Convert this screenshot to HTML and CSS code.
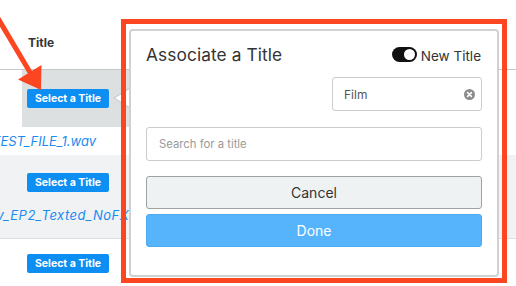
FILE: index.html
```html
<!DOCTYPE html>
<html>
<head>
<meta charset="utf-8">
<link rel="stylesheet" href="styles.css">
</head>
<body>
<div class="table">
  <div class="thead"><span class="th">Title</span></div>
  <div class="row row1">
    <div class="cell-active"><button class="sel">Select a Title</button></div>
    <div class="fname"><span class="clip">TEST_FILE_1.wav</span></div>
  </div>
  <div class="row row2">
    <div class="btncell"><button class="sel">Select a Title</button></div>
    <div class="fname"><span class="clip2">Show_v_EP2_Texted_NoFX.wav</span></div>
  </div>
  <div class="row row3">
    <div class="btncell"><button class="sel">Select a Title</button></div>
  </div>
</div>

<svg class="pop-arrow" width="20" height="24" viewBox="0 0 20 24">
  <polygon points="1,11 17,1 17,21" fill="#ffffff" stroke="#c9cbcc" stroke-width="1.2"/>
</svg>

<div class="popover">
  <div class="pop-head">
    <h3 class="pop-title">Associate a Title</h3>
    <label class="newtitle"><span class="toggle"><span class="knob"></span></span><span>New Title</span></label>
  </div>
  <div class="film-wrap">
    <div class="film">
      <span>Film</span>
      <svg class="clear" width="11" height="11" viewBox="0 0 11 11">
        <circle cx="5.5" cy="5.5" r="5.5" fill="#8c8c8c"/>
        <path d="M3.6 3.6 L7.4 7.4 M7.4 3.6 L3.6 7.4" stroke="#fff" stroke-width="1.5" stroke-linecap="round"/>
      </svg>
    </div>
  </div>
  <div class="search">Search for a title</div>
  <button class="cancel">Cancel</button>
  <button class="done">Done</button>
</div>

<div class="redbox"></div>
<svg class="redarrow" width="50" height="95" viewBox="0 0 50 95">
  <line x1="-4" y1="15" x2="31" y2="74" stroke="#fc4521" stroke-width="5"/>
  <polygon points="41,90 18,79.5 41.5,65" fill="#fc4521"/>
</svg>
</body>
</html>
```

FILE: styles.css
```css
* { box-sizing: border-box; }
html, body {
  margin: 0;
  padding: 0;
  width: 516px;
  height: 286px;
  overflow: hidden;
  background: #ffffff;
  font-family: "Inter", "Lato", sans-serif;
  position: relative;
}
.table { width: 516px; }
.thead {
  height: 70px;
  border-bottom: 1px solid #c5c7c8;
  padding: 35px 0 0 28px;
}
.th {
  display: block;
  font-weight: 700;
  font-size: 12px;
  line-height: 16px;
  color: #333333;
}
.row { width: 516px; }
.row1 { height: 85px; }
.cell-active {
  margin-left: 22px;
  width: 200px;
  height: 57px;
  background: #dde0e1;
  display: flex;
  align-items: center;
  padding-left: 5px;
}
.sel {
  display: block;
  border: none;
  background: #0c8ef2;
  color: #ffffff;
  font-family: "Inter", sans-serif;
  font-weight: 700;
  font-size: 10.5px;
  height: 19px;
  padding: 0 6px;
  margin: 0;
  border-radius: 2px;
  width: 82px;
  line-height: 19px;
  white-space: nowrap;
}
.fname {
  height: 28px;
  line-height: 28px;
  font-size: 13px;
  font-style: italic;
  color: #1a8cf0;
  white-space: nowrap;
  overflow: hidden;
}
.clip { margin-left: -8px; }
.clip2 { margin-left: -45px; letter-spacing: 0.5px; }
.row2 {
  background: #f0f2f3;
  height: 84px;
  border-bottom: 1px solid #dcdfe0;
  padding-top: 18px;
}
.row2 .fname { height: 46px; line-height: 46px; }
.btncell { padding-left: 27px; height: 19px; display: flex; align-items: center; }
.row3 { padding-top: 15px; }

.pop-arrow {
  position: absolute;
  left: 113px;
  top: 87px;
}
.popover {
  position: absolute;
  left: 129px;
  top: 29px;
  width: 370px;
  height: 248px;
  background: #ffffff;
  border: 2px solid #cfd1d2;
  border-radius: 4px;
  padding: 0 15px;
}
.pop-head {
  height: 46px;
  display: flex;
  align-items: center;
  justify-content: space-between;
}
.pop-title {
  margin: 0;
  font-weight: 400;
  font-size: 17.3px;
  color: #333333;
  letter-spacing: 0.1px;
}
.newtitle {
  display: flex;
  align-items: center;
  gap: 4px;
  font-size: 13.5px;
  color: #333333;
  margin-top: 4px;
  margin-right: 1px;
}
.toggle {
  width: 25px;
  height: 15px;
  border-radius: 8px;
  background: #111111;
  position: relative;
  display: inline-block;
  margin-top: -3px;
}
.knob {
  position: absolute;
  left: 12px;
  top: 2px;
  width: 11px;
  height: 11px;
  border-radius: 50%;
  background: #ffffff;
}
.film-wrap { display: flex; justify-content: flex-end; }
.film {
  width: 150px;
  height: 34px;
  border: 1px solid #cccccc;
  border-radius: 3px;
  display: flex;
  align-items: center;
  justify-content: space-between;
  padding: 0 6px 0 11px;
  font-size: 12px;
  color: #555555;
}
.search {
  margin-top: 16px;
  height: 34px;
  border: 1px solid #cccccc;
  border-radius: 3px;
  padding-left: 12px;
  font-size: 11.3px;
  color: #9a9a9a;
  display: flex;
  align-items: center;
}
.cancel, .done {
  display: block;
  width: 100%;
  height: 33px;
  border-radius: 3px;
  font-family: "Inter", sans-serif;
  font-size: 14px;
}
.cancel {
  margin-top: 15px;
  background: #eff2f3;
  border: 1px solid #9fa2a4;
  color: #333333;
}
.done {
  margin-top: 5px;
  background: #56b4fc;
  border: 1px solid #4eaaf0;
  color: #ffffff;
}
.redbox {
  position: absolute;
  left: 121px;
  top: 19px;
  width: 386px;
  height: 264px;
  border: 5px solid #fc4521;
}
.redarrow {
  position: absolute;
  left: 0;
  top: 0;
}
```
